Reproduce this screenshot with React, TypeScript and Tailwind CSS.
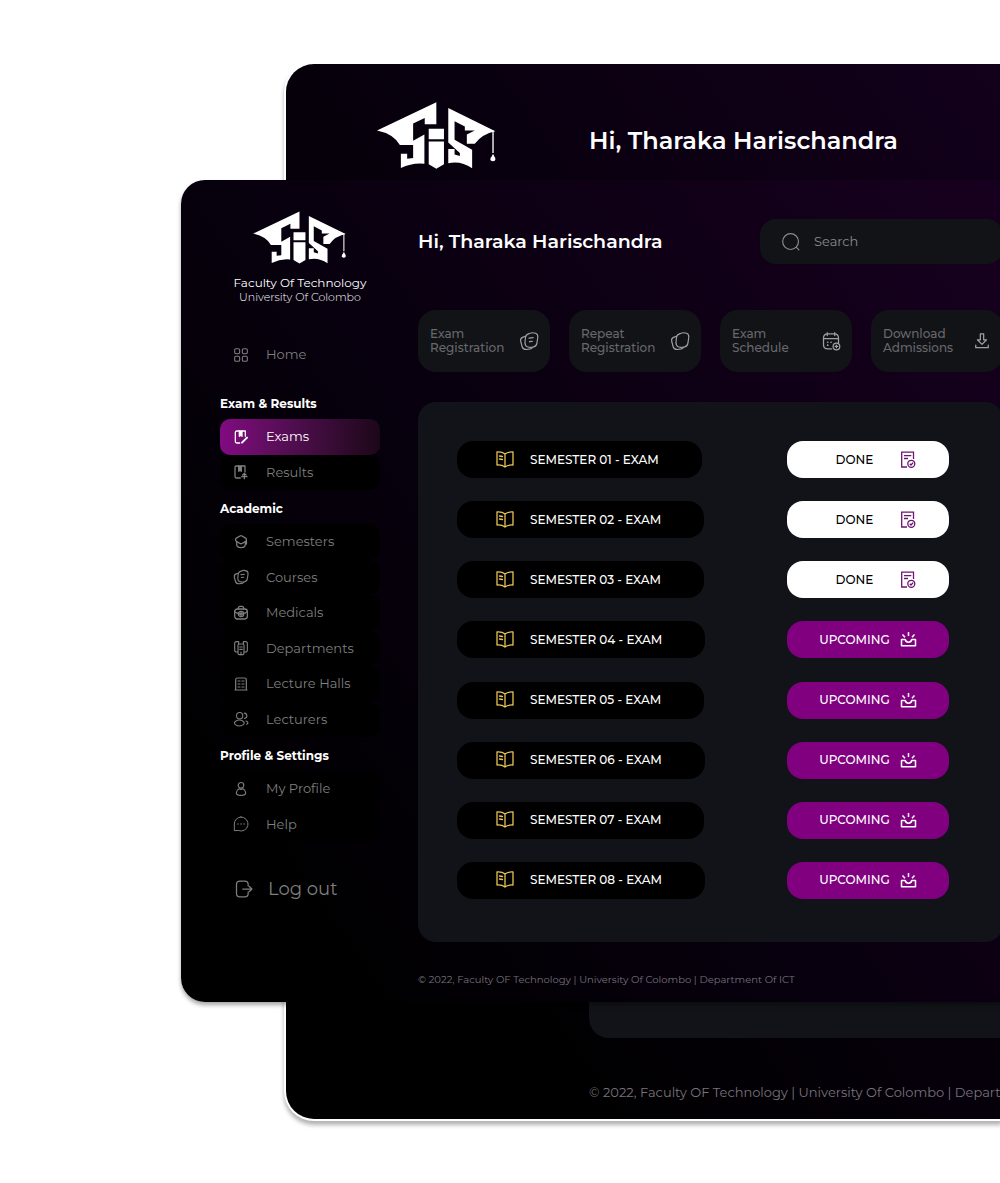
import type { ReactNode } from "react";

type IconProps = { className?: string; children?: ReactNode; sw?: number };

function Icon({ className = "size-4", sw = 1.5, children }: IconProps) {
  return (
    <svg
      viewBox="0 0 24 24"
      fill="none"
      stroke="currentColor"
      strokeWidth={sw}
      strokeLinecap="round"
      strokeLinejoin="round"
      aria-hidden="true"
      className={"shrink-0 " + className}
    >
      {children}
    </svg>
  );
}

const cardsShape = (
  <>
    <path d="M12 3.200Q16 1.200 20 2.800 23 4 22.500 8L21.500 14.500Q21 18.500 17 19.200 13 20.200 9.800 18.800 7 17.500 7.200 13.500L7.800 7.500Q8.200 4.500 12 3.200Z" />
    <path d="M7.800 6.300 4.800 7.300Q1.300 8.500 2 12L3.500 18Q4.500 22.300 9 22.200L13.500 21.500Q15.500 21 16.500 19.500" />
  </>
);

const icons = {
  home: (
    <Icon sw={1.6}>
      <rect x="2.500" y="2.500" width="7.500" height="7.500" rx="2" />
      <rect x="14" y="2.500" width="7.500" height="7.500" rx="2" />
      <rect x="2.500" y="14" width="7.500" height="7.500" rx="2" />
      <rect x="14" y="14" width="7.500" height="7.500" rx="2" />
    </Icon>
  ),
  exams: (
    <Icon sw={1.900}>
      <path d="M10 21H6a2.500 2.500 0 0 1-2.500-2.500V5A2 2 0 0 1 5.500 3H18.500v8" />
      <path d="M9.500 3v8l2-1.500 2 1.500V3" fill="currentColor" />
      <path d="m13.500 20.500 7.500-7.500" strokeWidth="3" />
    </Icon>
  ),
  results: (
    <Icon sw={1.900}>
      <path d="M11 21H5.500a2.500 2.500 0 0 1-2.500-2.500V5A2 2 0 0 1 5 3H18v9" />
      <path d="M8.500 3v8l2-1.500 2 1.500V3" fill="currentColor" />
      <path d="M17 14v8M14.500 16.500 17 14l2.500 2.500M13 19h8" />
    </Icon>
  ),
  semesters: (
    <Icon sw={1.900}>
      <path d="M10.500 3 5 6.200c-1.500.9-1.500 3.900 0 4.800l5.500 3.200c1 .6 2 .6 3 0L19 11c1.500-.9 1.500-3.900 0-4.800L13.500 3c-1-.6-2-.6-3 0Z" />
      <path d="M5.500 12v3.500c0 2.600 2.500 5 6.500 5s6.500-2.400 6.500-5V12M20.200 10v5" />
    </Icon>
  ),
  courses: (
    <Icon sw={1.700}>
      {cardsShape}
      <path d="m12 8.500 5-.6M12.500 12.800l3.500-.4" />
    </Icon>
  ),
  medicals: (
    <Icon sw={1.900}>
      <path d="M8 6V5c0-1.700.8-3 2.500-3h3C15.200 2 16 3.300 16 5v1" />
      <rect x="2.500" y="6" width="19" height="15" rx="4" />
      <path d="M2.500 10c2 2 4 2.500 6 2.500M21.500 10c-2 2-4 2.500-6 2.500M12 11v5M9.500 13.500h5" />
      <circle cx="12" cy="13.500" r="4" />
    </Icon>
  ),
  departments: (
    <Icon sw={1.700}>
      <path d="M7.500 18H5.500C3.500 18 2.500 17 2.500 15V5c0-1.500.8-2.500 2.500-2.500h3.500V6M16.500 18h2c2 0 3-1 3-3V5c0-1.500-.8-2.500-2.500-2.500h-3.500V6" />
      <rect x="7.500" y="6" width="9" height="16" rx="2" />
      <path d="M10 10.500h4M10 14h4M12 22v-4" />
    </Icon>
  ),
  halls: (
    <Icon sw={1.800}>
      <path d="M3 21H21M4 21V5.500C4 4 4.800 3 6.500 3h11C19.200 3 20 4 20 5.500V21" />
      <path d="M7.500 7.500h3M13.500 7.500h3M7.500 12h3M13.500 12h3M7.500 16.500h3M13.500 16.500h3" />
    </Icon>
  ),
  lecturers: (
    <Icon sw={1.600}>
      <circle cx="10" cy="7" r="4.700" />
      <path d="M17 3.200c2.400.3 3.800 2 3.800 4s-1.400 3.600-3.500 3.900" />
      <path d="M4 15.300c3-1.900 8-1.900 11 0 2.400 1.500 2.400 4 0 5.500-3 1.900-8 1.900-11 0-2.400-1.500-2.400-4 0-5.500ZM19.500 15c3 .8 4 3.500 1 5" />
    </Icon>
  ),
  profile: (
    <Icon sw={1.700}>
      <circle cx="12" cy="6.500" r="4.200" />
      <path d="M9 11.500C6.500 13 5 15 5 17.500 5 20.500 8 21.500 12 21.500s7-1 7-4c0-2.500-1.500-4.500-4-6Q12 14 9 11.500Z" />
    </Icon>
  ),
  help: (
    <Icon sw={1.500}>
      <path d="M12 1.500A10.500 10.500 0 1 1 8 21.700L2 22V12A10.300 10.300 0 0 1 12 1.500Z" />
      <path d="M7.500 12h.1M12 12h.1M16.500 12h.1" strokeWidth="2" />
    </Icon>
  ),
};

function Logo({ className }: { className: string }) {
  return (
    <svg viewBox="38 36 362 202" fill="#fff" className={className} role="img" aria-label="SIS logo">
      <path d="M38 122 217 37V103H182V84L147 101V153L181 134V222Q145 218 110 235V192H129V207L147 205V166H107Q88 132 38 122Z" />
      <path d="M194 117H240V148H194ZM194 155H240V224L217 237 194 224Z" />
      <path d="M253 54 395 124Q355 132 333 162H309V134L333 122H303V110L272 94V150L325 180V236Q290 212 253 221V178H272V194L288 199V190L253 158Z" />
      <path d="M386 122H390V190H386ZM388 192 392 200Q396 204 395 211 388 219 380 211 379 204 384 200Z" />
    </svg>
  );
}

type Entry = { label: string; icon: ReactNode; active?: boolean };

const sections: { title: string; items: Entry[]; height: string }[] = [
  {
    title: "Exam & Results",
    height: "min-h-[71px]",
    items: [
      { label: "Exams", icon: icons.exams, active: true },
      { label: "Results", icon: icons.results },
    ],
  },
  {
    title: "Academic",
    height: "min-h-[213px]",
    items: [
      { label: "Semesters", icon: icons.semesters },
      { label: "Courses", icon: icons.courses },
      { label: "Medicals", icon: icons.medicals },
      { label: "Departments", icon: icons.departments },
      { label: "Lecture Halls", icon: icons.halls },
      { label: "Lecturers", icon: icons.lecturers },
    ],
  },
  {
    title: "Profile & Settings",
    height: "min-h-[71px]",
    items: [
      { label: "My Profile", icon: icons.profile },
      { label: "Help", icon: icons.help },
    ],
  },
];

function NavItem({ label, icon, active }: Entry) {
  return (
    <li className="flex">
      <a
        href="#"
        className={
          "flex grow items-center gap-[17px] rounded-[10px] pl-[13px] text-[13px] " +
          (active
            ? "bg-linear-to-r from-[#820a82] to-[#1c0719] text-white"
            : "bg-black text-[#7f7f7f]")
        }
      >
        {icon}
        {label}
      </a>
    </li>
  );
}

function Sidebar() {
  return (
    <aside className="w-[237px] shrink-0 pt-[31px] pr-[38px] pb-[101px] pl-[39px]">
      <div className="flex flex-col items-center text-center text-white">
        <Logo className="h-[53px] w-[94px]" />
        <p className="mt-[11px] text-[12px] leading-[15px] whitespace-nowrap">Faculty Of Technology</p>
        <p className="text-[11px] leading-[15px] font-light whitespace-nowrap">University Of Colombo</p>
      </div>
      <nav>
        <a href="#" className="mt-8 mb-[21px] flex h-9 items-center gap-[17px] pl-[13px] text-[13px] text-[#7f7f7f]">
          {icons.home}
          Home
        </a>
        {sections.map((s) => (
          <section key={s.title} className="mb-[9px]">
            <h2 className="mb-[5px] text-[12px] leading-5 font-bold text-white">{s.title}</h2>
            <ul className={"grid auto-rows-fr " + s.height}>
              {s.items.map((i) => (
                <NavItem key={i.label} {...i} />
              ))}
            </ul>
          </section>
        ))}
      </nav>
      <button type="button" className="mt-[35px] flex items-center gap-[14px] pl-[14px] text-[18px] leading-6 text-[#7f7f7f]">
        <Icon className="size-5" sw={1.500}>
          <path d="M17 8.500V6.500c0-3-1-4-4-4H7c-3 0-4 1-4 4v11c0 3 1 4 4 4h6c3 0 4-1 4-4v-2M10.500 12H21.500M18.500 9l3 3-3 3" />
        </Icon>
        Log out
      </button>
    </aside>
  );
}

const actions = [
  {
    lines: ["Exam", "Registration"],
    icon: (
      <Icon className="size-5" sw={1.400}>
        {cardsShape}
        <path d="m12 8.500 5-.6M12.500 12.800l3.500-.4" />
      </Icon>
    ),
  },
  { lines: ["Repeat", "Registration"], icon: <Icon className="size-5" sw={1.400}>{cardsShape}</Icon> },
  {
    lines: ["Exam", "Schedule"],
    icon: (
      <Icon className="size-5" sw={1.500}>
        <path d="M7.500 2v3.500M16.500 2v3.500M3 9h18M12.500 21.500H8c-3.500 0-5-1.800-5-5V8.500c0-3.200 1.500-5 5-5h8c3.500 0 5 1.800 5 5V14" />
        <path d="M8 13.500h.1M12 13.500h.1M8 17h.1" strokeWidth="2" />
        <circle cx="18.500" cy="18.500" r="4" />
        <path d="M18.500 17v3M17 18.500h3" />
      </Icon>
    ),
  },
  {
    lines: ["Download", "Admissions"],
    icon: (
      <Icon className="size-5" sw={1.500}>
        <path d="M10 3.500h4v7h3.500L12 16 6.500 10.500H10ZM4.500 17V20h15v-3" />
      </Icon>
    ),
  },
];

const semesters = [
  { name: "SEMESTER 01 - EXAM", done: true },
  { name: "SEMESTER 02 - EXAM", done: true },
  { name: "SEMESTER 03 - EXAM", done: true },
  { name: "SEMESTER 04 - EXAM", done: false },
  { name: "SEMESTER 05 - EXAM", done: false },
  { name: "SEMESTER 06 - EXAM", done: false },
  { name: "SEMESTER 07 - EXAM", done: false },
  { name: "SEMESTER 08 - EXAM", done: false },
];

function SemesterRow({ name, done }: { name: string; done: boolean }) {
  return (
    <li className="flex items-center justify-between">
      <a
        href="#"
        className="flex h-[37px] items-center gap-[15px] rounded-2xl bg-black pr-[43px] pl-[38px] text-[12px] font-medium whitespace-nowrap text-white"
      >
        <svg viewBox="0 0 20 20" fill="none" stroke="#e8c552" strokeWidth="1.300" strokeLinejoin="round" strokeLinecap="round" className="size-5" aria-hidden="true">
          <path d="M10 4C8 2.300 5.500 1.800 2 2V15C5.500 14.800 8 15.400 10 17 12 15.400 14.500 14.800 18 15V2C14.500 1.800 12 2.300 10 4ZM10 4V17M4.500 6 7.500 6.500M4.500 9 7.500 9.500" />
        </svg>
        {name}
      </a>
      <button
        type="button"
        className={
          "flex h-[37px] w-[162px] items-center justify-end rounded-2xl pr-8 text-[12px] font-medium " +
          (done ? "bg-white text-black" : "bg-[#800080] text-white")
        }
      >
        <span className="w-[91px] text-center">{done ? "DONE" : "UPCOMING"}</span>
        {done ? (
          <svg viewBox="0 0 17 17" fill="none" stroke="#6e1470" strokeWidth="1.300" className="size-[17px]" aria-hidden="true">
            <path d="M7 16H1.700V1.200H13.500V8M4 4.700H11.300M4 7.500H8" />
            <circle cx="11.300" cy="12.800" r="3.500" />
            <path d="M9.700 12.800 11 14 13.200 11.600" />
          </svg>
        ) : (
          <svg viewBox="0 0 17 17" fill="none" stroke="#fff" strokeWidth="1.500" strokeLinejoin="round" className="size-[17px]" aria-hidden="true">
            <path d="M1.500 8.500H5.200C5.700 10.500 7 11.200 8.500 11.200S11.300 10.500 11.800 8.500H15.500V14.700H1.500ZM8.500 1V5M2.500 3.500 5 6.300M14.500 3.500 12 6.300" />
          </svg>
        )}
      </button>
    </li>
  );
}

const copyright = "© 2022, Faculty OF Technology | University Of Colombo | Department Of ICT";

function BackWindow() {
  return (
    <div className="col-start-1 row-start-1 mt-16 mb-16 ml-[286px] flex min-w-0 overflow-hidden rounded-l-[28px] bg-[linear-gradient(55deg,#000_20%,#08000e_60%,#13001b_100%)] whitespace-nowrap shadow-[0_0_0_2px_#fff,0_4px_4px_2px_rgba(0,0,0,0.3)]">
      <div className="w-[303px] shrink-0 pt-[38px] pl-[91px]">
        <Logo className="h-[67px] w-[120px]" />
      </div>
      <div className="flex min-w-0 grow flex-col pt-[61px] pb-[17px]">
        <h1 className="text-[24px] leading-8 font-semibold text-white">Hi, Tharaka Harischandra</h1>
        <div className="mt-[146px] grow rounded-bl-[20px] bg-[#111318]" />
        <p className="mt-[44px] text-[13px] leading-5 text-[#78727c]">{copyright}</p>
      </div>
    </div>
  );
}

function FrontWindow() {
  return (
    <div className="col-start-1 row-start-1 mt-[180px] -mr-10 ml-[181px] flex min-w-0 self-start rounded-l-3xl bg-[linear-gradient(55deg,#000_12%,#07000d_42%,#180020_100%)] pr-[37px] shadow-[0_3px_4px_rgba(0,0,0,0.35)]">
      <Sidebar />
      <main className="flex min-w-0 grow flex-col pt-[39px] pb-3">
        <header className="flex items-center justify-between">
          <h1 className="text-[19px] leading-7 font-semibold whitespace-nowrap text-white">Hi, Tharaka Harischandra</h1>
          <label className="flex h-[45px] w-[243px] items-center gap-[13px] rounded-2xl bg-[#111317] pl-[21px] text-[#8a8a8d]">
            <Icon className="size-5" sw={1.400}>
              <circle cx="11.500" cy="11.500" r="9.500" />
              <path d="m18.500 18.500 3 3" />
            </Icon>
            <input
              type="search"
              aria-label="Search"
              placeholder="Search"
              className="w-full min-w-0 bg-transparent text-[13px] outline-none placeholder:text-[#8a8a8d]"
            />
          </label>
        </header>
        <div className="mt-[46px] grid grid-cols-4 gap-[19px]">
          {actions.map((a) => (
            <button
              key={a.lines.join(" ")}
              type="button"
              className="flex h-[62px] items-center justify-between rounded-[18px] bg-[#111317] pr-[11px] pl-3 text-left text-[12px] leading-[14px] font-medium text-[#68686c]"
            >
              <span>
                {a.lines[0]}
                <br />
                {a.lines[1]}
              </span>
              <span className="text-[#a0a0a2]">{a.icon}</span>
            </button>
          ))}
        </div>
        <ul className="mt-[30px] flex grow flex-col justify-between rounded-[18px] bg-[#111318] pt-[39px] pr-[54px] pb-[43px] pl-[39px]">
          {semesters.map((s) => (
            <SemesterRow key={s.name} {...s} />
          ))}
        </ul>
        <footer className="mt-[28px] text-[10px] leading-5 whitespace-nowrap text-[#77717c]">{copyright}</footer>
      </main>
    </div>
  );
}

export default function App() {
  return (
    <div className="grid min-h-screen grid-cols-1 overflow-hidden bg-white font-['Montserrat','Inter',sans-serif]">
      <BackWindow />
      <FrontWindow />
    </div>
  );
}
